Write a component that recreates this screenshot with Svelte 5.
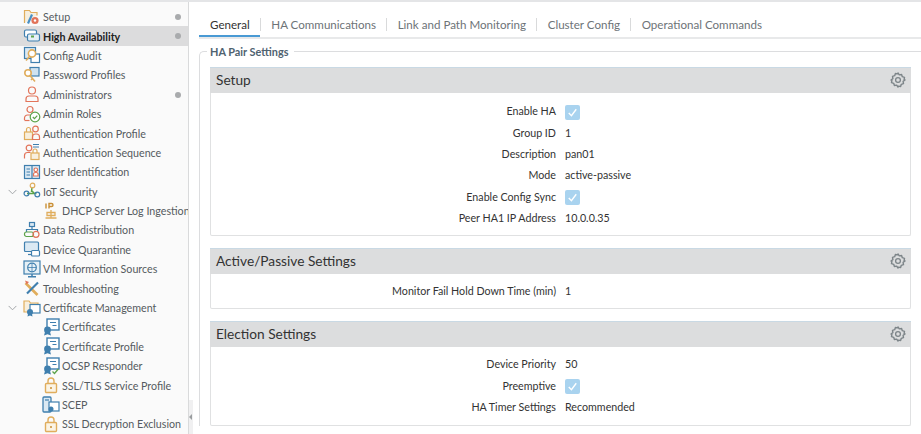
<script>
  const navItems = [
    { label: 'Setup', icon: 'setup', dot: true },
    { label: 'High Availability', icon: 'ha', dot: true, active: true },
    { label: 'Config Audit', icon: 'audit' },
    { label: 'Password Profiles', icon: 'password' },
    { label: 'Administrators', icon: 'admin', dot: true },
    { label: 'Admin Roles', icon: 'roles' },
    { label: 'Authentication Profile', icon: 'authprofile' },
    { label: 'Authentication Sequence', icon: 'authseq' },
    { label: 'User Identification', icon: 'userid' },
    { label: 'IoT Security', icon: 'iot', open: true },
    { label: 'DHCP Server Log Ingestion', icon: 'dhcp', child: true },
    { label: 'Data Redistribution', icon: 'redist' },
    { label: 'Device Quarantine', icon: 'quarantine' },
    { label: 'VM Information Sources', icon: 'vm' },
    { label: 'Troubleshooting', icon: 'trouble' },
    { label: 'Certificate Management', icon: 'certmgmt', open: true },
    { label: 'Certificates', icon: 'cert', child: true },
    { label: 'Certificate Profile', icon: 'cert', child: true },
    { label: 'OCSP Responder', icon: 'ocsp', child: true },
    { label: 'SSL/TLS Service Profile', icon: 'lock', child: true },
    { label: 'SCEP', icon: 'scep', child: true },
    { label: 'SSL Decryption Exclusion', icon: 'lock', child: true }
  ];

  const tabs = ['General', 'HA Communications', 'Link and Path Monitoring', 'Cluster Config', 'Operational Commands'];

  const panels = [
    {
      title: 'Setup',
      cls: 'setup',
      rows: [
        { label: 'Enable HA', check: true },
        { label: 'Group ID', value: '1' },
        { label: 'Description', value: 'pan01' },
        { label: 'Mode', value: 'active-passive' },
        { label: 'Enable Config Sync', check: true },
        { label: 'Peer HA1 IP Address', value: '10.0.0.35' }
      ]
    },
    {
      title: 'Active/Passive Settings',
      cls: 'passive',
      rows: [{ label: 'Monitor Fail Hold Down Time (min)', value: '1' }]
    },
    {
      title: 'Election Settings',
      cls: 'election',
      rows: [
        { label: 'Device Priority', value: '50' },
        { label: 'Preemptive', check: true },
        { label: 'HA Timer Settings', value: 'Recommended' }
      ]
    }
  ];
</script>

{#snippet icon(name)}
  <svg class="icon" viewBox="0 0 18 18" fill="none" stroke-width="1.2">
    {#if name === 'setup'}
      <path d="M1.5 15V2.5h5l1.500 2h6v3" stroke="#e0ad5c" fill="#f6efdf" />
      <path d="M4 15l4-9 2 1-4 9z" fill="#4a90c4" />
      <circle cx="12" cy="12.5" r="3.6" fill="#e2745a" />
      <circle cx="12" cy="12.5" r="1.2" fill="#fff" />
    {:else if name === 'ha'}
      <rect x="1.5" y="3" width="12" height="7" rx="1.5" stroke="#3f7fae" fill="#fff" />
      <rect x="4.5" y="7" width="12" height="7" rx="1.5" stroke="#3f7fae" fill="#e6f0f6" />
      <path d="M8 9.5h3" stroke="#5da34a" stroke-width="2" />
    {:else if name === 'audit'}
      <rect x="1.5" y="1.5" width="11" height="11" stroke="#3f7fae" fill="#dbe9f3" />
      <rect x="8" y="8" width="8.5" height="8.5" stroke="#3f7fae" fill="#fff" />
      <circle cx="9" cy="7.5" r="3.6" stroke="#e0ad5c" fill="#fff" stroke-width="1.6" />
      <path d="M6.5 10.5l-3.500 4" stroke="#e0ad5c" stroke-width="1.6" />
    {:else if name === 'password'}
      <rect x="7" y="1.5" width="9" height="8.5" stroke="#3f7fae" fill="#cfe2ef" />
      <circle cx="5" cy="7" r="3.2" stroke="#e0ad5c" fill="#fff" stroke-width="1.6" />
      <path d="M7 9.5l5 6m-2.500-3l-1.500 1.500" stroke="#e0ad5c" stroke-width="1.6" />
    {:else if name === 'admin'}
      <circle cx="9" cy="5.5" r="3.5" stroke="#e2745a" />
      <path d="M3 16.500V14a3 3 0 013-3h6a3 3 0 013 3v2.500z" stroke="#e2745a" />
    {:else if name === 'roles'}
      <circle cx="7" cy="4.5" r="3" stroke="#e2745a" />
      <path d="M1.5 15v-2a3 3 0 013-3h3" stroke="#e2745a" />
      <path d="M1.5 15.5h5" stroke="#e2745a" />
      <circle cx="12" cy="12" r="4.8" stroke="#5da34a" fill="#fff" />
      <path d="M9.8 12l1.700 1.700 2.800-3" stroke="#5da34a" />
    {:else if name === 'authprofile'}
      <rect x="1.5" y="8" width="8" height="7.5" stroke="#e0ad5c" fill="#f8efdd" />
      <path d="M3.5 8V5.5a2 2 0 014 0V8" stroke="#e0ad5c" />
      <circle cx="12.5" cy="5" r="2.8" stroke="#e2745a" />
      <path d="M9.500 15.500V13a3 3 0 013-3h1a3 3 0 013 3v2.500z" stroke="#e2745a" />
    {:else if name === 'authseq'}
      <circle cx="6" cy="5" r="2.8" stroke="#e2745a" />
      <path d="M1.5 15.500v-3a3 3 0 013-3h3" stroke="#e2745a" />
      <path d="M10 1.500h6M10 4h6" stroke="#3f7fae" />
      <rect x="8" y="10" width="8" height="6.5" stroke="#e0ad5c" fill="#f8efdd" />
      <path d="M10 10V8a2 2 0 014 0v2" stroke="#e0ad5c" />
    {:else if name === 'userid'}
      <rect x="1.5" y="2.5" width="15" height="13" stroke="#3f7fae" fill="#dbe9f3" />
      <path d="M9 2.500v13" stroke="#3f7fae" />
      <path d="M3.500 6H7M3.500 9H7M3.500 12H7" stroke="#3f7fae" />
      <circle cx="12.8" cy="6.8" r="1.8" stroke="#e2745a" fill="#fff" />
      <path d="M10.500 13v-1.500a2 2 0 012-2h.6a2 2 0 012 2V13z" stroke="#e2745a" fill="#fff" />
    {:else if name === 'iot'}
      <path d="M9 5l-.5 5M4 11.500h9.500M9 9l3 3" stroke="#5da34a" stroke-width="1.5" />
      <circle cx="9.5" cy="3.5" r="2.3" stroke="#e0ad5c" />
      <circle cx="3.5" cy="11.5" r="2.4" stroke="#3f7fae" />
      <circle cx="14.3" cy="12.5" r="2.4" stroke="#3f7fae" />
    {:else if name === 'dhcp'}
      <path d="M9 8v8M3.500 16h11M5 10.500h8v3H5z" stroke="#e0ad5c" stroke-width="1.3" />
      <path d="M4 1.500v5M7 6.500v-5h2.500a1.500 1.500 0 010 3H7" stroke="#c98f35" stroke-width="1.4" />
    {:else if name === 'redist'}
      <rect x="6.5" y="1.5" width="5" height="4" stroke="#3f7fae" fill="#dbe9f3" />
      <path d="M9 5.500v3M3.500 11V8.500h11V11" stroke="#3f7fae" />
      <rect x="1.5" y="11" width="9" height="4.5" rx="2" stroke="#5da34a" />
      <circle cx="13" cy="13.3" r="3" stroke="#e2745a" />
    {:else if name === 'quarantine'}
      <rect x="1.5" y="2" width="14" height="9.5" rx="1" stroke="#3f7fae" fill="#dbe9f3" />
      <path d="M5 14.500h4" stroke="#3f7fae" />
      <rect x="8.5" y="10.5" width="8" height="5.5" rx="1" stroke="#3f7fae" fill="#fff" />
    {:else if name === 'vm'}
      <rect x="1" y="1" width="16" height="13" stroke="#3f7fae" fill="#e6f0f6" />
      <circle cx="9" cy="7.5" r="4.3" stroke="#3f7fae" />
      <path d="M5 7.500h8M9 3.200v8.600" stroke="#3f7fae" stroke-width=".8" />
      <path d="M9 14v2.500M5 16.800h8" stroke="#3f7fae" stroke-width="1.5" />
    {:else if name === 'trouble'}
      <path d="M2.500 4l12 12" stroke="#e0ad5c" stroke-width="2.6" />
      <path d="M15 3.500l-11 11" stroke="#3f7fae" stroke-width="2.2" />
      <path d="M2 1.500l4 1.500-2.500 2.500z" fill="#e2745a" />
    {:else if name === 'certmgmt'}
      <path d="M1 13V2h5l1.500 2h7.500v9z" stroke="#e0ad5c" fill="#f8efdd" />
      <rect x="7" y="5.5" width="10" height="8.5" stroke="#3f7fae" fill="#fff" />
      <circle cx="7" cy="13" r="3" fill="#3f7fae" />
      <path d="M5 15l-.5 2.500 2.500-1 2.500 1L9 15z" fill="#3f7fae" />
    {:else if name === 'cert' || name === 'ocsp'}
      <rect x="5" y="1" width="12" height="11" stroke="#3f7fae" fill="#fff" stroke-width="1.4" />
      <path d="M8 4.500h6M10.500 7.500h4" stroke="#3f7fae" />
      <circle cx="5.5" cy="12" r="3.4" fill="#3f7fae" />
      <path d="M3 14l-1 3.500 3.500-1.200 3.500 1.200L8 14z" fill="#3f7fae" />
      {#if name === 'ocsp'}
        <path d="M10.500 14.500l2 2 3.800-4.500" stroke="#5da34a" stroke-width="1.3" />
      {/if}
    {:else if name === 'lock'}
      <rect x="3.5" y="7.5" width="11" height="9" rx="1" stroke="#e0ad5c" fill="#fbf4e5" stroke-width="1.4" />
      <path d="M6 7.500V5a3 3 0 016 0v2.500" stroke="#e0ad5c" stroke-width="1.4" />
      <circle cx="9" cy="12" r="1" fill="#c98f35" />
    {:else if name === 'scep'}
      <rect x="1" y="1" width="8" height="15" rx="1" stroke="#3f7fae" fill="#dbe9f3" stroke-width="1.3" />
      <path d="M3 4h4" stroke="#3f7fae" />
      <rect x="7" y="6" width="10" height="9" stroke="#3f7fae" fill="#fff" />
      <circle cx="9" cy="13" r="2.5" fill="#3f7fae" />
    {/if}
  </svg>
{/snippet}

<div class="page">
  <aside class="sidebar">
    {#each navItems as item}
      <div class="nav-row" class:active={item.active} class:child={item.child}>
        {#if item.open}
          <svg class="chevron" viewBox="0 0 10 6"><path d="M.7.7L5 5l4.300-4.300" /></svg>
        {/if}
        {@render icon(item.icon)}
        <span class="nav-label">{item.label}</span>
        {#if item.dot}<span class="dot"></span>{/if}
      </div>
    {/each}
  </aside>

  <div class="splitter"><span class="grip"></span><span class="handle"></span></div>

  <main class="content">
    <nav class="tabs">
      {#each tabs as tab, i}
        <span class="tab" class:current={i === 0}>{tab}</span>
      {/each}
    </nav>

    <fieldset class="group">
      <legend>HA Pair Settings</legend>
      {#each panels as panel}
        <section class="panel {panel.cls}">
          <header>
            <h3>{panel.title}</h3>
            <svg class="gear" viewBox="0 0 16 16" fill="none">
              <path d="M8 1l1.300 1.900 2.300-.4.700 2.200 2.200.7-.4 2.300L15 8l-1.900 1.300.4 2.300-2.200.7-.7 2.200-2.300-.4L8 15l-1.300-1.900-2.300.4-.7-2.200-2.200-.7.4-2.300L1 8l1.900-1.300-.4-2.300 2.200-.7.7-2.200 2.300.4z" stroke="#7d8589" stroke-width="1.4" stroke-linejoin="round" />
              <circle cx="8" cy="8" r="2.4" stroke="#7d8589" stroke-width="1.3" />
            </svg>
          </header>
          <div class="rows">
            {#each panel.rows as row}
              <div class="row">
                <span class="label">{row.label}</span>
                {#if row.check}
                  <span class="check">
                    <svg viewBox="0 0 14 14" fill="none"><path d="M3.500 7.500l2.500 2.500 4.500-6" stroke="#fff" stroke-width="1.3" /></svg>
                  </span>
                {:else}
                  <span class="value">{row.value}</span>
                {/if}
              </div>
            {/each}
          </div>
        </section>
      {/each}
    </fieldset>
  </main>
</div>

<style>
  :global(body) {
    margin: 0;
    background: #fff;
    font-family: Lato, "Open Sans", sans-serif;
    color: #333;
  }

  .page {
    display: flex;
    width: 921px;
    height: 434px;
    overflow: hidden;
    border-top: 2px solid #e4e5e7;
    box-sizing: border-box;
  }

  .sidebar {
    width: 189px;
    flex: none;
    overflow: hidden;
    background: #fafafa;
    padding-top: 5px;
    box-sizing: border-box;
    border-right: 1px solid #d9dadb;
  }

  .nav-row {
    position: relative;
    display: flex;
    align-items: center;
    height: 19.4px;
    padding-left: 23px;
    font-size: 10.7px;
    color: #555b60;
    white-space: nowrap;
  }

  .nav-row.child {
    padding-left: 42px;
  }

  .nav-row.active {
    background: #dcdcdd;
    color: #222;
    font-weight: 700;
  }

  .icon {
    width: 18px;
    height: 18px;
    flex: none;
    margin-right: 2px;
  }

  .chevron {
    position: absolute;
    left: 8px;
    top: 7px;
    width: 9px;
    height: 6px;
    fill: none;
    stroke: #9a9da0;
    stroke-width: 1;
  }

  .dot {
    position: absolute;
    left: 175px;
    top: 7px;
    width: 6px;
    height: 6px;
    border-radius: 50%;
    background: #a9abad;
  }

  .splitter {
    width: 10px;
    flex: none;
    position: relative;
  }

  .grip {
    position: absolute;
    left: 0;
    top: 398px;
    width: 4px;
    height: 34px;
    background: #f0f0f1;
  }

  .handle {
    position: absolute;
    left: 0;
    top: 412px;
    border-style: solid;
    border-width: 3px 3px 3px 0;
    border-color: transparent #9a9da0 transparent transparent;
  }

  .content {
    flex: 1;
    min-width: 0;
  }

  .tabs {
    display: flex;
    align-items: flex-start;
    height: 37px;
    padding: 16px 0 0 0.4px;
    box-sizing: border-box;
    border-bottom: 2px solid #e8e9ea;
    font-size: 11.6px;
    color: #6d7377;
  }

  .tab {
    position: relative;
    padding: 0 10px 0 10.6px;
    border-right: 1px solid #d9dadb;
    line-height: 13px;
  }

  .tab:last-child {
    border-right: none;
  }

  .tab.current {
    color: #333;
  }

  .tab.current::after {
    content: "";
    position: absolute;
    left: 0;
    right: 0;
    bottom: -6px;
    height: 2px;
    background: #4a9ad4;
  }

  .group {
    margin: 6px -12px 0 0;
    padding: 9px 10px 0 10px;
    border: 1px solid #dcdddf;
    border-right: none;
    border-bottom: none;
    border-top-left-radius: 5px;
    min-width: 0;
  }

  legend {
    padding: 0 5px 0 3px;
    margin-left: -3px;
    font-size: 10.9px;
    font-weight: 700;
    color: #4f6270;
    line-height: 13px;
  }

  .panel {
    border: 1px solid #e0e1e2;
    border-top: none;
    border-radius: 2px;
    width: 701px;
    box-sizing: border-box;
  }

  .panel + .panel {
    margin-top: 12px;
  }

  .panel.setup .rows {
    height: 142px;
    padding-top: 7px;
  }

  .panel.passive .rows {
    height: 34px;
    padding-top: 6px;
  }

  .panel.election .rows {
    height: 78px;
    padding-top: 6px;
  }

  .panel header {
    display: flex;
    align-items: center;
    justify-content: space-between;
    height: 26px;
    margin: 0 -1px;
    padding: 0 5px 2px 6px;
    background: #dcddde;
    border-top: 1px solid #c9d9e4;
    box-sizing: border-box;
  }

  h3 {
    margin: 0;
    font-size: 13.7px;
    font-weight: 400;
    color: #333;
  }

  .gear {
    width: 16px;
    height: 16px;
  }

  .rows {
    box-sizing: border-box;
    font-size: 10.7px;
  }

  .row {
    display: grid;
    grid-template-columns: 345px 1fr;
    column-gap: 9px;
    align-items: center;
    height: 21.4px;
  }

  .label {
    text-align: right;
    color: #333;
  }

  .value {
    color: #333;
  }

  .check {
    display: block;
    width: 15px;
    height: 15px;
    border-radius: 2px;
    background: #a9d3ef;
    margin-top: 3px;
  }

  .check svg {
    display: block;
    width: 15px;
    height: 15px;
  }
</style>
